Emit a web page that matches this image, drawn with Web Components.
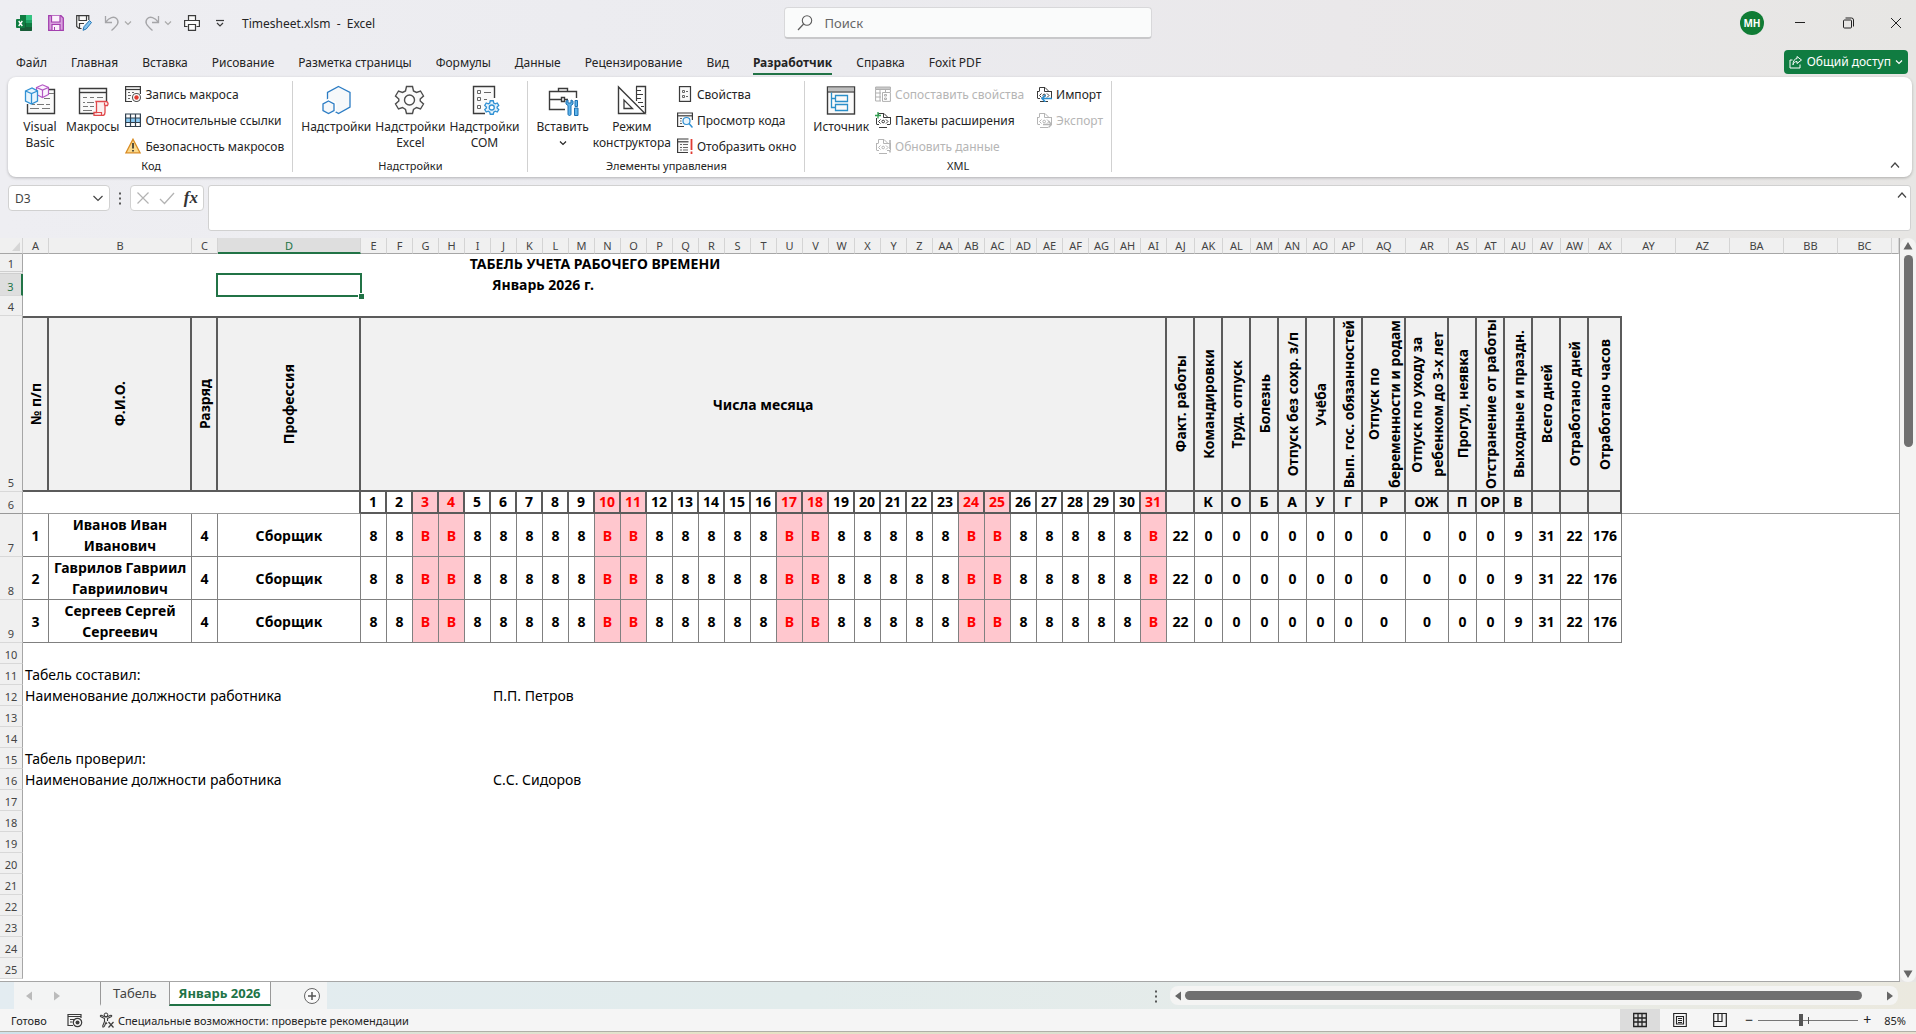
<!DOCTYPE html>
<html lang="ru">
<head>
<meta charset="UTF-8">
<title>Timesheet.xlsm - Excel</title>
<style>
  :root {
    --ui-font: "Noto Sans", "Open Sans", sans-serif;
    --accent: #217346;
    --accent-strong: #107c41;
    --text: #242424;
    --line: #d1d1d1;
  }
  body {
    margin: 0;
    font-family: var(--ui-font);
    font-size: 12px;
    color: var(--text);
  }
</style>
</head>
<body>
<excel-app></excel-app>

<script>
// Icon markup, keyed by name. Each entry: [viewBox size, svg content]
const G = '#3b3b3b';
const XML_DOC = c => `<path d="M3.500 5.500V1.500H9L12.500 5V5.500M8.500 1.500V5.500H14.500" stroke="${c}"/><path d="M1.500 5.500V12.500M15.500 5.500V12.500M1 5.500H3M12.500 5.500H16M4 15.500H12M2 12.500H4M12 12.500H15" stroke="${c}"/><path d="M5.500 7.500L3.500 9.500L5.500 11.500M11 7.500L13 9.500L11 11.500" stroke="${c}"/><circle cx="8.200" cy="9.500" r="1.300" stroke="${c}"/>`;
const GEAR = (c, f) => `<path d="M12.500 2.500H18.500L19.500 7L22.500 8.500L26.500 7L29.500 12L26.200 15V17L29.500 20L26.500 25L22.500 23.500L19.500 25.500L18.500 29.500H12.500L11.500 25.500L8.500 23.500L4.500 25L1.500 20L4.800 17V15L1.500 12L4.500 7L8.500 8.500L11.500 7Z" fill="${f}" stroke="${c}"/><circle cx="15.500" cy="16" r="5" fill="#fff" stroke="${c}"/>`;

const ICONS = {
  'excel': [16, `<rect x="4" y="0" width="12" height="16" rx="1" fill="#21a366"/><path d="M4 0h6v8H4z" fill="#107c41"/><path d="M10 0h5a1 1 0 0 1 1 1v4h-6z" fill="#33c481"/><path d="M4 8h12v7a1 1 0 0 1-1 1H5a1 1 0 0 1-1-1z" fill="#185c37"/><path d="M10 8h6v4h-6z" fill="#107c41"/><rect x="0" y="4" width="9" height="9" rx="1" fill="#107c41"/><path d="M2.700 6L6.300 11M6.300 6L2.700 11" stroke="#fff" stroke-width="1.400"/>`],
  'save': [16, `<path d="M.7.700H13L15.300 3V15.300H.7Z" fill="#d8a1de" stroke="#a33fae" stroke-width="1.300"/><path d="M3.500.700V7H12V.700" fill="#fbf1fc" stroke="#a33fae" stroke-width="1.200"/><path d="M4 15V9.500H12V15" fill="#fbf1fc" stroke="#a33fae" stroke-width="1.200"/><path d="M6.500 12v3" stroke="#a33fae"/>`],
  'save-as': [16, `<path d="M5.500 13.500H3L.7 11.500V.700H12.800V5" fill="#fafafa" stroke="${G}" stroke-width="1.200"/><path d="M3 .7V5.500H10.500V.700M3.500 13V8.500H8" stroke="${G}" stroke-width="1.200"/><path d="M7 15.300L8 11.700L13.500 5.500L15.500 7.500L10.200 14Z" fill="#86c4ef" stroke="#2779b8"/>`],
  'undo': [16, `<path d="M1.500 1V7.500H8M1.800 7.200C5 2.500 10 .8 12.800 3.800C15.500 7 14 10 7.500 15.500" stroke="#a5a5a8" stroke-width="1.300"/>`],
  'redo': [16, `<path d="M14.500 1V7.500H8M14.200 7.200C11 2.500 6 .8 3.200 3.800C.5 7 2 10 8.500 15.500" stroke="#a5a5a8" stroke-width="1.300"/>`],
  'print': [16, `<path d="M4.500 5V.600H11.500V5M3.500 11.500H.6V5.500H15.400V11.500H12.500M4.500 9.500H11.500V15.400H4.500Z" fill="#fafafa" stroke="${G}" stroke-width="1.200"/>`],
  'customize': [8, `<path d="M0 1.500H8" stroke="${G}" stroke-width="1.200"/><path d="M1 4L4 7L7 4" stroke="${G}" stroke-width="1.200"/>`],
  'chevron-down': [8, `<path d="M1 2.500L4 5.500L7 2.500" stroke="currentColor" stroke-width="1.200"/>`],
  'open-list': [12, `<path d="M1.500 4L6 8.500L10.500 4" stroke="#444" stroke-width="1.200"/>`],
  'chevron-up': [10, `<path d="M1 7.500L5 3L9 7.500" stroke="#444" stroke-width="1.200"/>`],
  'search': [16, `<circle cx="10" cy="5.500" r="4.700" stroke="#5c5c5c" stroke-width="1.100"/><path d="M6.600 9L1 15" stroke="#5c5c5c" stroke-width="1.200"/>`],
  'minimize': [12, `<path d="M1 5.500H11" stroke="#222"/>`],
  'restore': [12, `<rect x="1.500" y="3" width="8" height="8" rx="1" stroke="#222"/><path d="M3.500 1H9.500A2 2 0 0 1 11.500 3V9.500" stroke="#222"/>`],
  'close': [12, `<path d="M1 1L11 11M11 1L1 11" stroke="#222"/>`],
  'share': [14, `<path d="M3.500 5H1V13H11V9.500" stroke="#fff"/><path d="M8 1.500L12.500 5L8 8.500V6.500C5.500 6.500 4.500 8 4 9.800C4 6 5.500 3.800 8 3.600Z" stroke="#fff"/>`],
  'visual-basic': [32, `<path d="M15 5.500H30.500V29.500H3.500V20" fill="#fafafa" stroke="${G}" stroke-width="1.400"/><path d="M22 9.500H30M20 14.500H26M8 20.500H11M13 20.500H20M22 20.500H26M6 24.500H15M18 24.500H26" stroke="#777"/><path d="M12.500 3.500L18.500.800L24.500 3.500V10.500L18.500 13.500L12.500 10.500Z" fill="#fbf3fd" stroke="#b456c4" stroke-width="1.200"/><path d="M12.500 3.500L18.500 6L24.500 3.500M18.500 6V13.500" stroke="#b456c4" stroke-width="1.200"/><path d="M1.500 7L8 4L13.500 7V17L7.500 20L1.500 17Z" fill="#e9f5fd" stroke="#3191d4" stroke-width="1.300"/><path d="M1.500 7L7.500 9.500L13.500 7M7.500 9.500V20" stroke="#3191d4" stroke-width="1.300"/>`],
  'macros': [32, `<path d="M17 29.500H2.500V4.500H29.500V17" fill="#fafafa" stroke="${G}" stroke-width="1.400"/><path d="M2.500 8.500H29.500" stroke="${G}" stroke-width="1.400"/><path d="M6 13.500H10M13 13.500H17M20 13.500H26M6 18.500H8M10 18.500H17M6 22.500H11M13 22.500H17M6 26.500H15" stroke="#777"/><path d="M19 17.500H29C31 17.500 31.500 20 30.500 21.500H28V28.500C28 30.500 27 31.500 25.500 31.500H17V28.500H19.500V19Z" fill="#fbf0f0" stroke="#e0484b" stroke-width="1.300"/><path d="M27.500 21.500V18.500M17 28.500H24.500V31" stroke="#e0484b" stroke-width="1.200"/>`],
  'addins': [32, `<path d="M18.500 2.500L30 8.500V23L18.500 29.500L7.500 23V8.500Z" fill="#f6f8fa" stroke="#2b7cc4" stroke-width="1.300"/><path d="M8.500 16.500L14.500 19.800V26.500L8.500 30L2.500 26.500V19.800Z" fill="#fff" stroke="#fff" stroke-width="3.500"/><path d="M8.500 17L14 20V26.500L8.500 29.500L3 26.500V20Z" fill="#f6f8fa" stroke="#2b7cc4" stroke-width="1.300"/>`],
  'gear': [32, `<g stroke-width="1.400">${GEAR('#4d4d4d', '#fafafa')}</g>`],
  'com-addins': [32, `<path d="M17 29.500H5.500V2.500H26.500V14" fill="#fafafa" stroke="${G}" stroke-width="1.400"/><path d="M9.500 6.500H12.500V9.500H9.500ZM9.500 13.500H12.500V16.500H9.500ZM9.500 21.500H12.500V24.500H9.500ZM16 8.500H23M16 15.500H19" stroke="#666"/><g transform="translate(16 15.500) scale(.5)" stroke-width="2.600">${GEAR('#3191d4', '#e3f2fc')}</g>`],
  'toolbox': [32, `<path d="M11.500 7V4.500H20.500V7M18 25.500H2.500V7.500H29.500V14M2.500 15.500H14M18 15.500H21M14.500 13.500H17.500V17.500H14.500Z" stroke="${G}" stroke-width="1.400"/><path d="M20 17V20L22 21.500V30C22 32 25 32 25 30V21.500L27 20V17L25 16V19H22V16Z" transform="translate(-1 0)" fill="#5db3ea" stroke="#1c6fb0"/><path d="M28 16.500H30.500V22.500H28ZM27.500 24H31V31.500H27.500Z" fill="#5db3ea" stroke="#1c6fb0"/>`],
  'design': [32, `<path d="M20 2.500H29.500V29" stroke="${G}" stroke-width="1.400"/><path d="M20.500 2.500V17M21 6.500H25M21 10.500H27M21 14.500H25M22 18.500H27M25 22.500H28" stroke="${G}" stroke-width="1.200"/><path d="M2.500 3V29.500H29Z" stroke="${G}" stroke-width="1.400"/><path d="M8 16V24.500H16.500Z" stroke="${G}" stroke-width="1.300"/>`],
  'source': [32, `<rect x="2.500" y="3" width="27" height="27" fill="#fafafa" stroke="${G}" stroke-width="1.400"/><path d="M3 3.500H29V7.500H3Z" fill="#bfbfbf"/><path d="M3 8H29" stroke="${G}" stroke-width="1.200"/><path d="M10.500 11.500H22.500V17.500H10.500ZM10.500 20.500H22.500V26.500H10.500ZM6.500 8.500V23.500H10.500M6.500 14.500H10.500" stroke="#2b8fc9" stroke-width="1.300"/>`],
  'record': [16, `<path d="M7 15.500H.6V.6H15.400V8" fill="#fafafa" stroke="${G}" stroke-width="1.200"/><path d="M.6 3.500H15.400" stroke="${G}" stroke-width="1.200"/><path d="M3 6.500H5M7 6.500H9M3 9.500H6M3 12.500H5" stroke="#666"/><circle cx="11.500" cy="11.500" r="4" fill="#fff" stroke="#555" stroke-width="1.100"/><circle cx="11.500" cy="11.500" r="2.200" fill="#e03c32"/>`],
  'relative': [16, `<rect x=".6" y="2" width="14.800" height="12.500" fill="#fff"/><path d="M.6 6H15.400V10.500H.6Z" fill="#8dccf5"/><path d="M.6 2H15.400V14.500H.6ZM5.500 2V14.500M10.500 2V14.500M.6 6H15.400M.6 10.500H15.400" stroke="#30404f" stroke-width="1.200"/>`],
  'warning': [16, `<path d="M8 1.200L15 14.800H1Z" fill="#fbd98a" stroke="#d98c24" stroke-width="1.300"/><path d="M8 5V10.500M8 12V13.500" stroke="#222" stroke-width="1.500"/>`],
  'properties': [16, `<rect x="2.500" y=".6" width="11" height="14.800" fill="#fafafa" stroke="${G}" stroke-width="1.200"/><path d="M5.500 4.500H7.500V6.500H5.500ZM5.500 9.500H7.500V11.500H5.500ZM9 5.500H11M9 10.500H11" stroke="#666"/>`],
  'view-code': [16, `<path d="M7 14.500H.6V1H15.400V8" fill="#fafafa" stroke="${G}" stroke-width="1.200"/><path d="M.6 3.800H15.400" stroke="${G}" stroke-width="1.200"/><path d="M3 6.500H5M3 9H4.500M3 11.500H5M12 6.500H13" stroke="#666"/><circle cx="9.500" cy="9" r="3.500" fill="#e9f5fd" stroke="#3191d4" stroke-width="1.200"/><path d="M12 11.500L15.500 15.500" stroke="#3191d4" stroke-width="1.500"/>`],
  'run-dialog': [16, `<path d="M11 14.500H.6V1H11.500" fill="#fafafa" stroke="${G}" stroke-width="1.200"/><path d="M.6 3.800H11.500" stroke="${G}" stroke-width="1.200"/><path d="M3 6.500H5M6 6.500H11M3 9.500H5M6 9.500H11M3 12H5M6 12H11" stroke="#666"/><path d="M14.500 1V12M14.500 13.500V16" stroke="#e03c32" stroke-width="1.800"/>`],
  'map': [16, `<path d="M.6 1H15.400V3.500H.6Z" fill="#c9c9c9" stroke="#b0b0b0"/><path d="M.6 3.500V15H6M.6 7H6M.6 11H6M5 3.500V15M10.500 3.500V6M15.400 3.500V6" stroke="#b0b0b0"/><path d="M7.500 6.500H15.400V15.400H7.500ZM9.500 8.500H11.500V10H9.500ZM9.500 12H11.500V13.500H9.500Z" stroke="#b0b0b0"/>`],
  'packs': [16, `${XML_DOC(G)}<path d="M0 3H6V6H0Z" fill="#fff"/><path d="M3 0V6.500M0 3.500H6" stroke="#2f9e4f" stroke-width="1.300"/>`],
  'refresh': [16, `${XML_DOC('#b5b5b5')}<path d="M15 2V11M15 12.500V14.500" stroke="#b5b5b5" stroke-width="1.600"/>`],
  'import': [16, `${XML_DOC(G)}<path d="M6 12.500H16M9.500 9L6 12.500L9.500 16" stroke="#2b8fd0" stroke-width="1.500"/>`],
  'export': [16, `${XML_DOC('#b5b5b5')}<path d="M7 12.500H15.500M12.500 9L15.500 12.500L12.500 15.500" stroke="#b5b5b5" stroke-width="1.300"/>`],
  'cancel': [14, `<path d="M1.500 1.500L12.500 12.500M12.500 1.500L1.500 12.500" stroke="#b3b3b3" stroke-width="1.200"/>`],
  'enter': [16, `<path d="M1 9L5.500 13.500L15 3" stroke="#b3b3b3" stroke-width="1.300"/>`],
  'more': [16, `<path d="M8 2.500V4.500M8 7.500V9.500M8 12.500V14.500" stroke="#333" stroke-width="1.600"/>`],
  'prev': [10, `<path d="M8 .5V9.500L2 5Z" fill="currentColor"/>`],
  'next': [10, `<path d="M2 .5V9.500L8 5Z" fill="currentColor"/>`],
  'up': [10, `<path d="M.5 8.500H9.500L5 1Z" fill="currentColor"/>`],
  'down': [10, `<path d="M.5 1.500H9.500L5 9Z" fill="currentColor"/>`],
  'add': [18, `<circle cx="9" cy="9" r="7.500" fill="#fafafa" stroke="#666"/><path d="M9 5V13M5 9H13" stroke="#555" stroke-width="1.500"/>`],
  'macro-status': [16, `<path d="M6 13.500H1V2.500H14V6" stroke="${G}" stroke-width="1.200"/><path d="M1 4.500H14M3 7.500H7M3 10H5.500" stroke="${G}"/><circle cx="10.500" cy="10.500" r="4.200" stroke="${G}" stroke-width="1.200"/><circle cx="10.500" cy="10.500" r="2" fill="${G}"/>`],
  'accessibility': [16, `<circle cx="7" cy="2.800" r="1.800" stroke="${G}"/><path d="M1.500 4.500L5.500 6.500V9.500L3.500 14.500M12.500 4.500L8.500 6.500V9M1.500 4.500C1 3 2.500 3 3 3.500L6 5H8L11 3.500C12.500 3 13 3.500 12.500 4.500M3.500 14.500C4 15.500 5 15 5.500 14L7 10.500L8 12" stroke="${G}" stroke-width="1.100"/><path d="M9.500 10L14.500 15.500M14.500 10L9.500 15.500" stroke="${G}" stroke-width="1.200"/>`],
  'view-normal': [16, `<path d="M1.700 1.500H14.300V14.500H1.700ZM6 1.500V14.500M10 1.500V14.500M1.700 6H14.300M1.700 10H14.300" stroke="#222" stroke-width="1.300"/>`],
  'view-layout': [16, `<path d="M1.700 1.500H14.300V14.500H1.700ZM4.500 4.500H11.500V12H4.500ZM6 6.500H10M6 8.500H10M6 10.500H10" stroke="#222" stroke-width="1.100"/>`],
  'view-break': [16, `<path d="M1.700 1.500H14.300V14.500H1.700ZM1.700 9.500H10V1.500M6 1.500V9.500" stroke="#222" stroke-width="1.200"/>`],
};

// Small helper: attach an open shadow root filled from a template string
class BaseElement extends HTMLElement {
  constructor() {
    super();
    this.attachShadow({ mode: 'open' });
  }

  connectedCallback() {
    const template = document.createElement('template');
    template.innerHTML = this.template();
    this.shadowRoot.replaceChildren(template.content.cloneNode(true));
  }
}

class UiIcon extends BaseElement {
  template() {
    const [box, content] = ICONS[this.getAttribute('name')];
    return `
      <style>
        :host { display: inline-flex; flex: none; }
        svg { display: block; }
      </style>
      <svg width="${box}" height="${box}" viewBox="0 0 ${box} ${box}" fill="none" aria-hidden="true">${content}</svg>
    `;
  }
}

class TitleBar extends BaseElement {
  template() {
    return `
      <style>
        :host {
          display: grid;
          grid-template-columns: 41fr 368px 40fr;
          align-items: center;
          height: 46px;
        }
        button {
          border: 0;
          padding: 0;
          background: none;
          font: inherit;
          color: inherit;
          display: flex;
          align-items: center;
          justify-content: center;
        }
        .quick { display: flex; align-items: center; gap: 12px; padding-left: 16px; }
        .quick .first { margin-right: 4px; }
        .split { display: flex; align-items: center; gap: 4px; color: #aaa; }
        .custom { margin: 0 6px 0 4px; }
        .name { white-space: pre; }
        .search {
          display: flex;
          align-items: center;
          gap: 12px;
          box-sizing: border-box;
          height: 32px;
          padding: 0 12px;
          border: 1px solid #d8d8da;
          border-bottom: 2px solid #c8c8ca;
          border-radius: 4px;
          background: #fafbfb;
        }
        .search input {
          flex: 1;
          border: 0;
          padding: 0;
          background: none;
          outline: none;
          font: inherit;
          font-size: 13px;
        }
        .search input::placeholder { color: #666; opacity: 1; }
        .window { display: flex; align-items: center; justify-content: flex-end; }
        .avatar {
          width: 24px;
          height: 24px;
          margin-right: 12px;
          border-radius: 50%;
          background: #107c35;
          color: #fff;
          font-size: 10px;
          font-weight: bold;
        }
        .control { width: 48px; height: 32px; }
        .window .control:last-child { margin-right: -4px; }
      </style>
      <div class="quick">
        <ui-icon class="first" name="excel"></ui-icon>
        <button aria-label="Сохранить"><ui-icon name="save"></ui-icon></button>
        <button aria-label="Сохранить как"><ui-icon name="save-as"></ui-icon></button>
        <button class="split" aria-label="Отменить"><ui-icon name="undo"></ui-icon><ui-icon name="chevron-down"></ui-icon></button>
        <button class="split" aria-label="Вернуть"><ui-icon name="redo"></ui-icon><ui-icon name="chevron-down"></ui-icon></button>
        <button aria-label="Печать"><ui-icon name="print"></ui-icon></button>
        <button class="custom" aria-label="Настройка панели"><ui-icon name="customize"></ui-icon></button>
        <span class="name">Timesheet.xlsm  -  Excel</span>
      </div>
      <label class="search">
        <ui-icon name="search"></ui-icon>
        <input type="text" placeholder="Поиск" aria-label="Поиск">
      </label>
      <div class="window">
        <button class="avatar">МН</button>
        <button class="control" aria-label="Свернуть"><ui-icon name="minimize"></ui-icon></button>
        <button class="control" aria-label="Восстановить"><ui-icon name="restore"></ui-icon></button>
        <button class="control" aria-label="Закрыть"><ui-icon name="close"></ui-icon></button>
      </div>
    `;
  }
}

class RibbonTabs extends BaseElement {
  template() {
    const tabs = ['Файл', 'Главная', 'Вставка', 'Рисование', 'Разметка страницы', 'Формулы', 'Данные',
      'Рецензирование', 'Вид', 'Разработчик', 'Справка', 'Foxit PDF'];
    return `
      <style>
        :host {
          display: flex;
          align-items: center;
          justify-content: space-between;
          height: 31px;
          padding: 0 8px 0 4px;
        }
        nav { display: flex; }
        button { border: 0; background: none; font: inherit; color: inherit; white-space: nowrap; }
        .tab { padding: 6px 12px 0; line-height: 16px; }
        .tab span { display: block; padding-bottom: 2px; border-bottom: 2px solid transparent; }
        .tab[aria-selected="true"] { font-weight: bold; }
        .tab[aria-selected="true"] span { border-color: var(--accent); }
        .share {
          display: flex;
          align-items: center;
          gap: 4px;
          height: 24px;
          padding: 0 5px;
          border-radius: 4px;
          background: var(--accent-strong);
          color: #fff;
        }
      </style>
      <nav role="tablist">
        ${tabs.map(t => `<button class="tab" role="tab" aria-selected="${t === 'Разработчик'}"><span>${t}</span></button>`).join('')}
      </nav>
      <button class="share"><ui-icon name="share"></ui-icon>Общий доступ<ui-icon name="chevron-down"></ui-icon></button>
    `;
  }
}

class RibbonButton extends BaseElement {
  template() {
    const big = this.hasAttribute('big');
    const disabled = this.hasAttribute('disabled') ? 'disabled' : '';
    return `
      <style>
        :host { display: block; }
        button {
          display: flex;
          align-items: center;
          border: 0;
          padding: 0 2px 0 4px;
          background: none;
          font: inherit;
          color: inherit;
          gap: 4px;
          height: 26px;
          white-space: nowrap;
        }
        button:disabled { color: #b5b5b5; }
        .big {
          flex-direction: column;
          gap: 3px;
          height: auto;
          min-width: 48px;
          padding: 3px 2px 0;
          line-height: 16px;
        }
      </style>
      <button class="${big ? 'big' : ''}" ${disabled}>
        <ui-icon name="${this.getAttribute('icon')}"></ui-icon>
        <span><slot></slot></span>
      </button>
    `;
  }
}

class RibbonGroup extends BaseElement {
  template() {
    return `
      <style>
        :host {
          display: flex;
          flex-direction: column;
          justify-content: space-between;
          margin: 4px 0 5px;
          padding: 0 6px;
          border-right: 1px solid var(--line);
        }
        .items { display: flex; align-items: flex-start; }
        .label { text-align: center; font-size: 11px; line-height: 12px; }
        ::slotted(.column) { display: flex; flex-direction: column; }
        ::slotted(.wide) { margin-right: 6px; }
      </style>
      <div class="items"><slot></slot></div>
      <div class="label">${this.getAttribute('label')}</div>
    `;
  }
}

class ExcelRibbon extends BaseElement {
  template() {
    return `
      <style>
        :host {
          display: flex;
          height: 100px;
          margin: 0 4px 0 8px;
          padding-left: 2px;
          border-radius: 8px;
          background: #fff;
          box-shadow: 0 1px 3px rgba(0, 0, 0, .25);
          box-sizing: border-box;
        }
        .arrow { display: flex; justify-content: center; padding-top: 4px; }
        .center { display: block; text-align: center; }
        .collapse { margin: auto 10px 2px auto; border: 0; padding: 2px; background: none; }
      </style>
      <ribbon-group label="Код">
        <ribbon-button big icon="visual-basic"><span class="center">Visual<br>Basic</span></ribbon-button>
        <ribbon-button big icon="macros">Макросы</ribbon-button>
        <div class="column">
          <ribbon-button icon="record">Запись макроса</ribbon-button>
          <ribbon-button icon="relative">Относительные ссылки</ribbon-button>
          <ribbon-button icon="warning">Безопасность макросов</ribbon-button>
        </div>
      </ribbon-group>
      <ribbon-group label="Надстройки">
        <ribbon-button big icon="addins">Надстройки</ribbon-button>
        <ribbon-button big icon="gear"><span class="center">Надстройки<br>Excel</span></ribbon-button>
        <ribbon-button big icon="com-addins"><span class="center">Надстройки<br>COM</span></ribbon-button>
      </ribbon-group>
      <ribbon-group label="Элементы управления">
        <ribbon-button big icon="toolbox">Вставить<span class="arrow"><ui-icon name="chevron-down"></ui-icon></span></ribbon-button>
        <ribbon-button big icon="design"><span class="center">Режим<br>конструктора</span></ribbon-button>
        <div class="column">
          <ribbon-button icon="properties">Свойства</ribbon-button>
          <ribbon-button icon="view-code">Просмотр кода</ribbon-button>
          <ribbon-button icon="run-dialog">Отобразить окно</ribbon-button>
        </div>
      </ribbon-group>
      <ribbon-group label="XML">
        <ribbon-button big icon="source">Источник</ribbon-button>
        <div class="column wide">
          <ribbon-button icon="map" disabled>Сопоставить свойства</ribbon-button>
          <ribbon-button icon="packs">Пакеты расширения</ribbon-button>
          <ribbon-button icon="refresh" disabled>Обновить данные</ribbon-button>
        </div>
        <div class="column">
          <ribbon-button icon="import">Импорт</ribbon-button>
          <ribbon-button icon="export" disabled>Экспорт</ribbon-button>
        </div>
      </ribbon-group>
      <button class="collapse" aria-label="Свернуть ленту"><ui-icon name="chevron-up"></ui-icon></button>
    `;
  }
}

class FormulaBar extends BaseElement {
  template() {
    return `
      <style>
        :host { display: flex; align-items: flex-start; padding: 8px 5px 7px 8px; }
        .box {
          display: flex;
          align-items: center;
          box-sizing: border-box;
          height: 26px;
          border: 1px solid var(--line);
          border-radius: 4px;
          background: #fff;
        }
        button { border: 0; padding: 0; background: none; display: flex; color: #444; }
        .name { width: 102px; padding: 0 5px 0 6px; }
        .name input { flex: 1; min-width: 0; border: 0; padding: 0; font: inherit; color: #444; outline: none; }
        .more { padding: 5px 2px; }
        .tools { width: 74px; justify-content: space-between; padding: 0 5px; }
        .fx { font: italic bold 17px "Liberation Serif", serif; color: #333; }
        .formula { flex: 1; height: 46px; margin-left: 4px; align-items: flex-start; border-radius: 3px; }
        .formula textarea { flex: 1; align-self: stretch; border: 0; padding: 4px; resize: none; outline: none; font: inherit; background: none; }
        .formula button { padding: 4px 3px; }
      </style>
      <div class="box name">
        <input type="text" value="D3" aria-label="Имя">
        <button aria-label="Список имён"><ui-icon name="open-list"></ui-icon></button>
      </div>
      <div class="more"><ui-icon name="more"></ui-icon></div>
      <div class="box tools">
        <button aria-label="Отмена"><ui-icon name="cancel"></ui-icon></button>
        <button aria-label="Ввод"><ui-icon name="enter"></ui-icon></button>
        <button class="fx" aria-label="Вставить функцию">fx</button>
      </div>
      <div class="box formula">
        <textarea aria-label="Строка формул"></textarea>
        <button aria-label="Свернуть строку формул"><ui-icon name="chevron-up"></ui-icon></button>
      </div>
    `;
  }
}

const DAYS_OFF = [3, 4, 10, 11, 17, 18, 24, 25, 31];
const DAYS = Array.from({ length: 31 }, (_, i) => i + 1);

// Totals to the right of the calendar: title, code, value, column width
const TOTALS = [
  ['Факт. работы', '', 22, 28],
  ['Командировки', 'К', 0, 28],
  ['Труд. отпуск', 'О', 0, 28],
  ['Болезнь', 'Б', 0, 28],
  ['Отпуск без сохр. з/п', 'А', 0, 28],
  ['Учёба', 'У', 0, 28],
  ['Вып. гос. обязанностей', 'Г', 0, 28],
  ['Отпуск по<br>беременности и родам', 'Р', 0, 43],
  ['Отпуск по уходу за<br>ребенком до 3-х лет', 'ОЖ', 0, 43],
  ['Прогул, неявка', 'П', 0, 28],
  ['Отстранение от работы', 'ОР', 0, 28],
  ['Выходные и праздн.', 'В', 9, 28],
  ['Всего дней', '', 31, 28],
  ['Отработано дней', '', 22, 28],
  ['Отработано часов', '', 176, 33],
];

const WORKERS = ['Иванов Иван<br>Иванович', 'Гаврилов Гавриил<br>Гавриилович', 'Сергеев Сергей<br>Сергеевич'];
const WIDTHS = [26, 143, 26, 143, ...DAYS.map(() => 26), ...TOTALS.map(t => t[3]), 54, 54, 54, 54, 54];

function columnName(i) {
  const letter = n => String.fromCharCode(65 + n);
  return i < 26 ? letter(i) : letter(Math.floor(i / 26) - 1) + letter(i % 26);
}

class SheetGrid extends BaseElement {
  row(number, content, cls = '') {
    return `<tr class="${cls}"><th class="num" scope="row">${number}</th>${content}</tr>`;
  }

  vertical(text) {
    return `<td class="head"><div class="turn">${text}</div></td>`;
  }

  rows() {
    const off = day => (DAYS_OFF.includes(day) ? 'off' : '');
    const rest = '<td colspan="6"></td>';
    const blank = '<td colspan="56"></td>';
    const note = (left, right) => `<td class="note" colspan="9">${left}</td><td class="note" colspan="47">${right}</td>`;
    const out = [];

    out.push(this.row(1, `<td class="title" colspan="35">ТАБЕЛЬ УЧЕТА РАБОЧЕГО ВРЕМЕНИ</td><td colspan="21"></td>`, 'r1'));
    out.push(this.row(3, `<td colspan="3"></td><td class="active"></td><td class="title" colspan="14">Январь 2026 г.</td><td colspan="38"></td>`, 'r3'));
    out.push(this.row(4, blank, 'r4'));
    out.push(this.row(5,
      ['№ п/п', 'Ф.И.О.', 'Разряд', 'Профессия'].map(t => this.vertical(t)).join('') +
      '<td class="head" colspan="31">Числа месяца</td>' +
      TOTALS.map(t => this.vertical(t[0])).join('') + rest, 'r5'));
    out.push(this.row(6,
      '<td class="lead" colspan="4"></td>' +
      DAYS.map(d => `<td class="code ${off(d)}">${d}</td>`).join('') +
      TOTALS.map(t => `<td class="code gray">${t[1]}</td>`).join('') + rest, 'r6'));
    WORKERS.forEach((name, i) => {
      const cells = [i + 1, name, 4, 'Сборщик'].map(t => `<td class="cell">${t}</td>`).join('') +
        DAYS.map(d => `<td class="cell ${off(d)}">${off(d) ? 'В' : 8}</td>`).join('') +
        TOTALS.map(t => `<td class="cell">${t[2]}</td>`).join('');
      out.push(this.row(7 + i, cells + rest, 'worker'));
    });

    const notes = {
      11: note('Табель составил:', ''),
      12: note('Наименование должности работника', 'П.П. Петров'),
      15: note('Табель проверил:', ''),
      16: note('Наименование должности работника', 'С.С. Сидоров'),
    };
    for (let n = 10; n <= 25; n++) out.push(this.row(n, notes[n] || blank));
    return out.join('');
  }

  template() {
    return `
      <style>
        :host {
          display: block;
          overflow: hidden;
          background: #fff;
          border-right: 1px solid #a6a6a6;
          border-bottom: 1px solid #a6a6a6;
        }
        table {
          width: 100%;
          table-layout: fixed;
          border-collapse: separate;
          border-spacing: 0;
          font-size: 14px;
          line-height: 21px;
          color: #000;
        }
        th, td { box-sizing: border-box; padding: 0; text-align: center; white-space: nowrap; }
        tr { height: 21px; }
        thead tr { height: 16px; }
        thead th {
          border-right: 1px solid #d4d4d4;
          border-bottom: 1px solid #a6a6a6;
          background: #f0f0f0;
          color: #444;
          font: 11px/14px var(--ui-font);
        }
        thead .picked { background: #dedede; color: var(--accent); border-bottom: 2px solid var(--accent); line-height: 13px; }
        thead svg { display: block; margin: 1px 2px 0 auto; }
        .num {
          border-right: 1px solid #a6a6a6;
          border-bottom: 1px solid #d8d8d8;
          background: #f0f0f0;
          color: #444;
          font: 11px/16px var(--ui-font);
          vertical-align: bottom;
        }
        .r1 { height: 20px; }
        .r1 .num { border-bottom: 3px double #cfcfcf; line-height: 14px; }
        .r3 { height: 22px; }
        .r3 .num { background: #dedede; color: var(--accent); border-right: 2px solid var(--accent); }
        .r4 { height: 20px; }
        .title { font-weight: bold; line-height: 16px; }
        .active { position: relative; }
        .active::before {
          content: "";
          position: absolute;
          inset: -1px -1px -1px -2px;
          border: 2px solid var(--accent);
        }
        .active::after {
          content: "";
          position: absolute;
          right: -3px;
          bottom: -3px;
          width: 5px;
          height: 5px;
          border: 1px solid #fff;
          border-width: 1px 0 0 1px;
          background: var(--accent);
        }
        .r5 { height: 176px; }
        .head {
          border: 2px solid #5b5b5b;
          border-left: 0;
          background: #f1f1f1;
          font-weight: bold;
        }
        .turn {
          display: inline-block;
          writing-mode: vertical-rl;
          text-orientation: sideways;
          transform: rotate(180deg);
          vertical-align: middle;
        }
        .r6 { height: 22px; }
        .r6 td { border-bottom: 1px solid #999; }
        .r6 .num { border-bottom-color: #999; }
        .lead { border-right: 2px solid #5b5b5b; }
        .r6 .code { border-right: 2px solid #5b5b5b; border-bottom: 2px solid #5b5b5b; font-weight: bold; line-height: 20px; }
        .gray { background: #f1f1f1; }
        .worker { height: 43px; }
        .cell { border-right: 1px solid #808080; border-bottom: 1px solid #808080; font-weight: bold; }
        .off { background: #ffc7ce; color: #f00; }
        .note { text-align: left; padding-left: 2px; line-height: 18px; }
      </style>
      <table>
        <colgroup><col style="width: 23px">${WIDTHS.map(w => `<col style="width: ${w}px">`).join('')}<col></colgroup>
        <thead>
          <tr>
            <th><svg width="8" height="9" viewBox="0 0 8 9"><path d="M8 0V9H0Z" fill="#d6d6d6"/></svg></th>
            ${WIDTHS.map((w, i) => `<th scope="col" class="${i === 3 ? 'picked' : ''}">${columnName(i)}</th>`).join('')}
            <th></th>
          </tr>
        </thead>
        <tbody>${this.rows()}</tbody>
      </table>
    `;
  }
}

class ScrollBar extends BaseElement {
  template() {
    const vertical = this.hasAttribute('vertical');
    return `
      <style>
        :host {
          display: flex;
          flex-direction: ${vertical ? 'column' : 'row'};
          align-items: center;
          gap: ${vertical ? '4px' : '2px'};
          padding: 3px;
          border-radius: 8px;
          background: #f4f4f3;
          color: #666;
        }
        .track { flex: 1; display: flex; flex-direction: inherit; align-self: stretch; align-items: center; }
        .thumb { border-radius: 5px; background: #707070; ${vertical ? 'width: 9px; height: 27%' : 'height: 9px; width: 97%'}; }
      </style>
      <ui-icon name="${vertical ? 'up' : 'prev'}"></ui-icon>
      <div class="track"><div class="thumb"></div></div>
      <ui-icon name="${vertical ? 'down' : 'next'}"></ui-icon>
    `;
  }
}

class SheetTabs extends BaseElement {
  template() {
    return `
      <style>
        :host {
          display: flex;
          height: 27px;
          background: linear-gradient(90deg, #e3ecf1, #e2ecec 42%, #e6ebe9 70%, #ebe9df);
        }
        .left { display: flex; align-items: center; width: 313px; margin-left: 14px; background: #f3f4f4; }
        button { border: 0; padding: 0; background: none; display: flex; font: inherit; font-size: 13px; color: #444; }
        .nav { color: #bbb; margin-left: 10px; }
        .nav + .nav { margin-left: 18px; }
        .tab {
          box-sizing: border-box;
          align-items: center;
          align-self: stretch;
          justify-content: center;
          padding: 0 12px;
          margin-bottom: 3px;
          border-bottom: 2px solid transparent;
        }
        .first { margin-left: 38px; border-left: 1px solid #999; }
        .current {
          padding: 0 9px;
          background: #fff;
          color: var(--accent);
          font-weight: bold;
          border-right: 1px solid #999;
          border-left: 1px solid #999;
          border-bottom-color: var(--accent);
        }
        .add { margin-left: 32px; }
        .more { display: flex; align-items: center; margin-left: auto; }
        scroll-bar { width: 38%; margin: 4px 18px 4px 6px; box-sizing: border-box; }
      </style>
      <div class="left">
        <button class="nav" aria-label="Назад"><ui-icon name="prev"></ui-icon></button>
        <button class="nav" aria-label="Вперёд"><ui-icon name="next"></ui-icon></button>
        <button class="tab first">Табель</button>
        <button class="tab current">Январь 2026</button>
        <button class="add" aria-label="Новый лист"><ui-icon name="add"></ui-icon></button>
      </div>
      <div class="more"><ui-icon name="more"></ui-icon></div>
      <scroll-bar></scroll-bar>
    `;
  }
}

class StatusBar extends BaseElement {
  template() {
    return `
      <style>
        :host {
          display: flex;
          align-items: center;
          height: 22px;
          padding: 0 10px 0 11px;
          border-bottom: 1px solid #b0b0a8;
          background: #f5f5f5;
          font-size: 11px;
        }
        button { border: 0; padding: 0; background: none; display: flex; align-items: center; justify-content: center; font: inherit; color: inherit; }
        .macro { margin: 0 16px 0 20px; }
        .access { gap: 3px; }
        .views { display: flex; align-self: stretch; margin-left: auto; }
        .views button { width: 40px; }
        .views .on { background: #dcdcdc; }
        .zoom { display: flex; align-items: center; gap: 5px; margin-left: 5px; font-size: 14px; line-height: 16px; }
        .percent { margin-left: 13px; }
        input {
          appearance: none;
          width: 100px;
          height: 12px;
          margin: 0;
          background:
            linear-gradient(#555, #555) 50% 50% / 1px 7px no-repeat,
            linear-gradient(#777, #777) 50% 50% / 100% 1px no-repeat;
        }
        input::-webkit-slider-thumb { appearance: none; width: 4px; height: 12px; background: #555; }
      </style>
      <span>Готово</span>
      <button class="macro" aria-label="Запись макроса"><ui-icon name="macro-status"></ui-icon></button>
      <button class="access"><ui-icon name="accessibility"></ui-icon>Специальные возможности: проверьте рекомендации</button>
      <div class="views">
        <button class="on" aria-label="Обычный"><ui-icon name="view-normal"></ui-icon></button>
        <button aria-label="Разметка страницы"><ui-icon name="view-layout"></ui-icon></button>
        <button aria-label="Страничный"><ui-icon name="view-break"></ui-icon></button>
      </div>
      <div class="zoom">
        <button aria-label="Уменьшить">−</button>
        <input type="range" min="0" max="100" value="42" aria-label="Масштаб">
        <button aria-label="Увеличить">+</button>
      </div>
      <span class="percent">85%</span>
    `;
  }
}

class ExcelApp extends BaseElement {
  template() {
    return `
      <style>
        :host {
          display: flex;
          flex-direction: column;
          height: 100vh;
          overflow: hidden;
          background: linear-gradient(90deg, #eeeef2, #ebebef 45%, #eae8ea 70%, #e7e6e4);
        }
        .sheet { display: flex; flex: 1; min-height: 0; }
        sheet-grid { flex: 1; min-width: 0; }
        .desktop { height: 2px; background: linear-gradient(90deg, #cfe3ec, #e6e2c4 40%, #d8e0d4 60%, #eadfd0); }
      </style>
      <title-bar></title-bar>
      <ribbon-tabs></ribbon-tabs>
      <excel-ribbon></excel-ribbon>
      <formula-bar></formula-bar>
      <div class="sheet">
        <sheet-grid></sheet-grid>
        <scroll-bar vertical></scroll-bar>
      </div>
      <sheet-tabs></sheet-tabs>
      <status-bar></status-bar>
      <div class="desktop"></div>
    `;
  }
}

customElements.define('ui-icon', UiIcon);
customElements.define('title-bar', TitleBar);
customElements.define('ribbon-tabs', RibbonTabs);
customElements.define('ribbon-button', RibbonButton);
customElements.define('ribbon-group', RibbonGroup);
customElements.define('excel-ribbon', ExcelRibbon);
customElements.define('formula-bar', FormulaBar);
customElements.define('sheet-grid', SheetGrid);
customElements.define('scroll-bar', ScrollBar);
customElements.define('sheet-tabs', SheetTabs);
customElements.define('status-bar', StatusBar);
customElements.define('excel-app', ExcelApp);
</script>
</body>
</html>
